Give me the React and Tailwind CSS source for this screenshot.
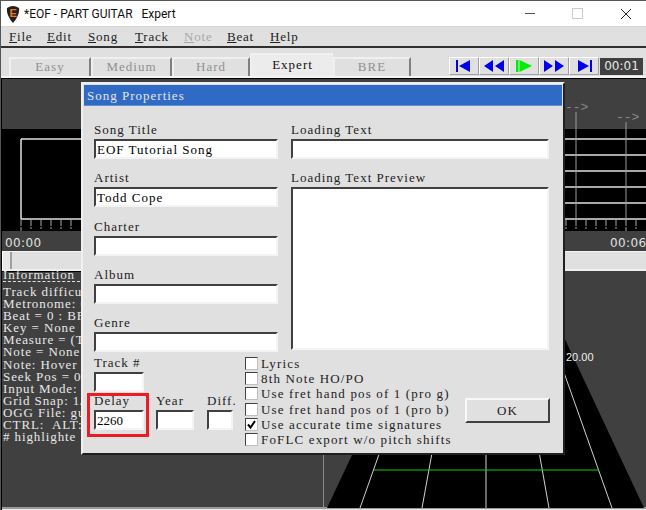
const font = { fontFamily: '"Liberation Serif", serif' };

const tabs = [
  { label: "Easy", width: "w-[82px]" },
  { label: "Medium", width: "w-[81px]" },
  { label: "Hard", width: "w-[78px]" },
  { label: "Expert", width: "w-[83px]", active: true },
  { label: "BRE", width: "w-[78px]" },
];

const menus = [
  { label: "File", width: "w-[38px]" },
  { label: "Edit", width: "w-[41px]" },
  { label: "Song", width: "w-[47px]" },
  { label: "Track", width: "w-[49px]" },
  { label: "Note", width: "w-[43px]", disabled: true },
  { label: "Beat", width: "w-[43px]" },
  { label: "Help", width: "w-[40px]" },
];

// only what shows beside the dialog
const infoLines = [
  "Track difficu",
  "Metronome: 0",
  "Beat = 0 : BF",
  "Key = None",
  "Measure = (T",
  "Note = None",
  "Note: Hover",
  "Seek Pos = 0",
  "Input Mode:",
  "Grid Snap: 1/",
  "OGG File: gu",
  "CTRL:  ALT:",
  "# highlighte",
];

const checks = [
  { label: "Lyrics" },
  { label: "8th Note HO/PO" },
  { label: "Use fret hand pos of 1 (pro g)" },
  { label: "Use fret hand pos of 1 (pro b)" },
  { label: "Use accurate time signatures", checked: true },
  { label: "FoFLC export w/o pitch shifts" },
];

function Transport({ children }) {
  return (
    <div className="w-[30px] h-[18px] flex items-center justify-center bg-[#e0e0e0] border-t border-l border-white border-r border-b border-r-[#a0a0a0] border-b-[#a0a0a0]">
      <svg width="24" height="14" viewBox="0 0 24 14">{children}</svg>
    </div>
  );
}

function TextBox({ value, className = "" }) {
  return (
    <div className={`h-[20px] bg-white border-2 border-t-[#404040] border-l-[#404040] border-r-[#f4f4f4] border-b-[#f4f4f4] pl-[1px] text-[13px] leading-[18px] tracking-[1px] text-black whitespace-nowrap overflow-hidden ${className}`}>
      {value}
    </div>
  );
}

function Field({ label, value, className = "", valueClass = "" }) {
  return (
    <div className={className}>
      <div className="h-[17px] text-[13px] leading-[15px] tracking-[1px] text-[#222] whitespace-nowrap">{label}</div>
      <TextBox value={value} className={valueClass} />
    </div>
  );
}

function CheckRow({ label, checked }) {
  return (
    <div className="h-[15.2px] flex items-center gap-[3px]">
      <div className="w-[13px] h-[13px] shrink-0 bg-white border border-t-[#404040] border-l-[#404040] border-r-[#c0c0c0] border-b-[#c0c0c0] flex items-center justify-center">
        {checked && (
          <svg width="11" height="11" viewBox="0 0 11 11">
            <path d="M2 5.5 L4.5 8.5 L9 2" fill="none" stroke="#000" strokeWidth="2" />
          </svg>
        )}
      </div>
      <span className="text-[13px] leading-[13px] tracking-[1.15px] text-[#222] whitespace-nowrap">{label}</span>
    </div>
  );
}

function SongProperties() {
  return (
    <div style={font} className="absolute left-[80px] top-[81px] w-[484px] h-[373px] bg-[#e0e0e0] border-t-2 border-l-2 border-t-[#f0f0f0] border-l-[#f0f0f0] border-r-2 border-b-2 border-r-[#202020] border-b-[#202020] p-[1px]">
      <div className="h-[21px] bg-[#2f6bc4] pl-[3px] text-[13px] leading-[22px] tracking-[1px] text-[#e4e4e4] border-b border-[#5f8fd6]">
        Song Properties
      </div>
      <div className="pl-[10px] pr-[11px] pt-[16px] flex gap-[13px]">
        <div className="w-[184px] flex flex-col gap-[11.25px] shrink-0">
          <Field label="Song Title" value="EOF Tutorial Song" />
          <Field label="Artist" value="Todd Cope" />
          <Field label="Charter" />
          <Field label="Album" />
          <Field label="Genre" />
        </div>
        <div className="w-[258px] shrink-0">
          <Field label="Loading Text" value="" />
          <div className="h-[11px]" />
          <div className="h-[17px] text-[13px] leading-[15px] tracking-[1px] text-[#222]">Loading Text Preview</div>
          <div className="h-[163px] bg-white border-2 border-t-[#404040] border-l-[#404040] border-r-[#f4f4f4] border-b-[#f4f4f4]" />
        </div>
      </div>
      <div className="pl-[10px] flex">
        <div className="w-[151px] shrink-0 pt-[3px]">
          <Field label="Track #" className="w-[50px]" />
          <div className="flex mt-[1px]">
            <div className="relative w-[62px] shrink-0">
              <Field label="Delay" value="2260" className="w-[50px]" valueClass="tracking-normal" />
              <div className="absolute left-[-7px] top-0 w-[62px] h-[44px] border-[3px] border-[#ed1c24]" />
            </div>
            <Field label="Year" className="w-[38px] mr-[13px] shrink-0" />
            <Field label="Diff." className="w-[26px] shrink-0" />
          </div>
        </div>
        <div className="w-[220px] shrink-0 pt-[4px]">
          {checks.map((c) => (
            <CheckRow key={c.label} label={c.label} checked={c.checked} />
          ))}
        </div>
        <div className="pt-[46px]">
          <button className="w-[85px] h-[25px] bg-[#e0e0e0] border-2 border-t-[#f8f8f8] border-l-[#f8f8f8] border-r-[#404040] border-b-[#404040] text-[13px] tracking-[1px] text-[#222]">
            OK
          </button>
        </div>
      </div>
    </div>
  );
}

export default function App() {
  return (
    <div className="relative w-[646px] h-[510px] overflow-hidden flex flex-col bg-[#e0e0e0] border-t border-l border-[#555]">
      {/* windows title bar */}
      <div className="h-[25px] shrink-0 bg-white flex items-center relative">
        <svg className="ml-[5px]" width="14" height="18" viewBox="0 0 14 18">
          <path d="M1 3 Q7 -1 13 3 Q14 10 7 18 Q0 10 1 3 Z" fill="#231f20" />
          <text x="3.5" y="11.5" fontSize="11" fontWeight="700" fill="#e8791e" style={{ fontFamily: '"Liberation Sans", sans-serif' }}>E</text>
        </svg>
        <span className="ml-[4px] text-[12px] text-[#111] whitespace-pre" style={{ fontFamily: 'Roboto, sans-serif' }}>*EOF - PART GUITAR   Expert</span>
        <div className="ml-auto flex items-center">
          <div className="w-[10px] h-[1px] bg-[#555] mr-[37px]" />
          <div className="w-[11px] h-[11px] border border-[#ccc] mr-[37px]" />
          <svg className="mr-[14px]" width="12" height="12" viewBox="0 0 12 12">
            <path d="M1 1 L11 11 M11 1 L1 11" stroke="#222" strokeWidth="1" />
          </svg>
        </div>
      </div>

      {/* menu */}
      <div style={font} className="h-[20px] shrink-0 flex items-center pl-[8px] border-t border-[#d8d8d8] text-[13px] tracking-[0.8px] text-[#222]">
        {menus.map((m) => (
          <div key={m.label} className={`${m.width} ${m.disabled ? "text-[#a8a8a8]" : ""}`}>
            <span className="underline decoration-1">{m.label[0]}</span>
            {m.label.slice(1)}
          </div>
        ))}
      </div>

      {/* tabs + transport */}
      <div style={font} className="h-[32px] shrink-0 border-t-2 border-t-[#303030] border-b-2 border-b-[#f4f4f4] flex items-end justify-between pr-[3px]">
        <div className="flex items-end pl-[8px]">
          {tabs.map((t) => (
            <div
              key={t.label}
              className={`${t.width} ${t.active ? "h-[23px] bg-[#ececec] text-[#111] leading-[19px]" : "h-[19px] text-[#909090] leading-[15px] border-r-2 border-r-[#808080]"} border-t-2 border-l-2 border-t-[#f0f0f0] border-l-[#f0f0f0] text-center text-[13px] tracking-[1px] shrink-0`}
            >
              {t.label}
            </div>
          ))}
        </div>
        <div className="flex items-center mb-[1px]">
          <Transport>
            <path d="M4 1h2v12H4z M18 1v12L7 7z" fill="#0000ee" />
          </Transport>
          <Transport>
            <path d="M11 1v12L2 7z M22 1v12L13 7z" fill="#0000ee" />
          </Transport>
          <Transport>
            <path d="M4 1h2.5v12H4z M7.5 1v12L20 7z" fill="#00ee00" />
          </Transport>
          <Transport>
            <path d="M2 1v12l9-6z M13 1v12l9-6z" fill="#0000ee" />
          </Transport>
          <Transport>
            <path d="M6 1v12l11-6z M18 1h2v12h-2z" fill="#0000ee" />
          </Transport>
          <div className="ml-[1px] w-[43px] h-[17px] bg-[#404040] text-[#e8e8e8] text-[12px] leading-[17px] text-center" style={{ fontFamily: '"DejaVu Sans", sans-serif' }}>00:01</div>
        </div>
      </div>

      {/* editor */}
      <div className="flex-1 min-h-0 flex flex-col bg-[#404040] border-t border-l border-black">
        <svg className="shrink-0" width="645" height="152" viewBox="0 0 645 152">
          <rect x="0" y="50" width="645" height="102" fill="#000" />
          <path d="M19 60H645 M19 140H645 M19 60V140" stroke="#e0e0e0" strokeWidth="1.5" fill="none" />
          <path d="M400 76H645 M400 92H645 M400 108H645 M400 124H645" stroke="#e0e0e0" strokeWidth="1.5" fill="none" />
          <path d="M19 140V152 M29 140V150 M39 140V150 M49 140V150 M59 140V150 M69 140V150 M564 140V150 M574 140V150 M584 140V150 M594 140V150 M604 140V150 M614 140V150 M624 140V152 M634 140V150" stroke="#a8a8a8" strokeWidth="1" strokeDasharray="7 1" />
          <path d="M574 33V140 M624 43V140" stroke="#9a9a9a" strokeWidth="1" />
          <text x="563" y="32" fontSize="13" fill="#8a8a8a" style={{ fontFamily: '"Liberation Mono", monospace' }}>--&gt;</text>
          <text x="614" y="42" fontSize="13" fill="#8a8a8a" style={{ fontFamily: '"Liberation Mono", monospace' }}>--&gt;</text>
        </svg>
        <div className="h-[20px] shrink-0 flex justify-between items-center pl-[3px] pt-[3px] text-[12px] tracking-[0.4px] text-[#e0e0e0] whitespace-nowrap" style={{ fontFamily: '"DejaVu Sans", sans-serif' }}>
          <span>00:00</span>
          <span className="w-[36px]">00:06</span>
        </div>
        <div className="h-[18px] shrink-0 bg-[#e0e0e0] border-t border-[#f4f4f4] flex">
          <div className="w-[10px] h-full bg-[#e8e8e8] border-r-2 border-[#a0a0a0] border-l border-l-white" />
        </div>
        <div className="flex-1 min-h-0 flex border-t-2 border-[#f0f0f0] relative">
          <div className="w-[321px] shrink-0 border-t border-black">
            <div style={font} className="w-[78px] text-[#e8e8e8] text-[13px] leading-[12px] tracking-[0.9px] whitespace-pre pl-[1px]">
              <div className="h-[10px] -mt-[3px]">Information</div>
              <div className="border-t border-dashed border-[#e0e0e0] mt-[2px] pt-[4px]">
                {infoLines.map((line) => (
                  <div key={line} className="h-[12.1px]">{line}</div>
                ))}
              </div>
            </div>
          </div>
          <div className="flex-1 relative border-l border-[#8a8a8a]">
            <svg width="322" height="237" viewBox="323 270 322 237" className="block">
              <polygon points="438,270 532,270 643,507 326,507" fill="#000" />
              <path d="M443 270L359 507 M464 270L421 507 M485 270V507 M506 270L548 507 M527 270L611 507" stroke="#d0d0d0" strokeWidth="1" />
              <path d="M373 469H598" stroke="#10d010" strokeWidth="1" />
              <text x="565" y="360" fontSize="11" fill="#f0f0f0" style={{ fontFamily: '"Liberation Sans", sans-serif' }}>20.00</text>
            </svg>
          </div>
        </div>
        <div className="h-[3px] shrink-0 bg-[#9a9a9a] border-b border-[#e8e8e8]" />
      </div>

      <SongProperties />
    </div>
  );
}
